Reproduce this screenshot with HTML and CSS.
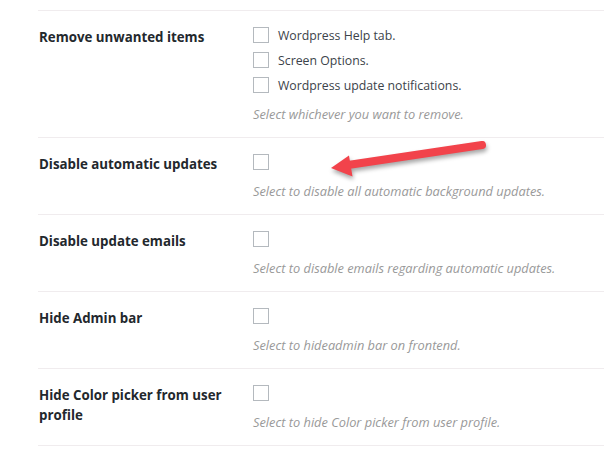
FILE: index.html
```html
<!DOCTYPE html>
<html>
<head>
    <title>Settings</title>
    <link rel="stylesheet" href="styles.css">
</head>
<body>
    <div class="wrap">
        <table class="form-table">
            <tr>
                <th>Remove unwanted items</th>
                <td>
                    <label class="option"><input type="checkbox"> Wordpress Help tab.</label>
                    <label class="option"><input type="checkbox"> Screen Options.</label>
                    <label class="option"><input type="checkbox"> Wordpress update notifications.</label>
                    <p class="description">Select whichever you want to remove.</p>
                </td>
            </tr>
            <tr>
                <th>Disable automatic updates</th>
                <td>
                    <label class="option"><input type="checkbox"></label>
                    <p class="description">Select to disable all automatic background updates.</p>
                </td>
            </tr>
            <tr>
                <th>Disable update emails</th>
                <td>
                    <label class="option"><input type="checkbox"></label>
                    <p class="description">Select to disable emails regarding automatic updates.</p>
                </td>
            </tr>
            <tr>
                <th>Hide Admin bar</th>
                <td>
                    <label class="option"><input type="checkbox"></label>
                    <p class="description">Select to hideadmin bar on frontend.</p>
                </td>
            </tr>
            <tr>
                <th>Hide Color picker from user profile</th>
                <td>
                    <label class="option"><input type="checkbox"></label>
                    <p class="description">Select to hide Color picker from user profile.</p>
                </td>
            </tr>
        </table>
    </div>

    <!-- red annotation arrow drawn over the screenshot -->
    <svg class="arrow" width="604" height="459" viewBox="0 0 604 459">
        <g class="arrow-shape">
            <line x1="482" y1="145" x2="348" y2="165" stroke="#f2434b" stroke-width="8" stroke-linecap="round"/>
            <polygon points="331,168 349,155.5 352.5,176.5" fill="#f2434b"/>
        </g>
    </svg>
</body>
</html>
```

FILE: styles.css
```css
body {
    margin: 0;
    font-family: "Open Sans", "Noto Sans", Arial, sans-serif;
    background: #fff;
    color: #444;
}

.wrap {
    padding: 10px 0 0 38px;
}

.form-table {
    width: 100%;
    border-collapse: collapse;
}

.form-table tr {
    border-top: 1px solid #f0ecee;
    border-bottom: 1px solid #f0ecee;
}

.form-table th {
    width: 200px;
    padding: 16px 14px 14px 1px;
    text-align: left;
    vertical-align: top;
    font-size: 13.3px;
    font-weight: 700;
    line-height: 20px;
    color: #23282d;
}

.form-table td {
    padding: 16px 0 14px 0;
    vertical-align: top;
}

.option {
    display: flex;
    align-items: center;
    gap: 9px;
    height: 16px;
    margin-bottom: 9px;
    font-size: 12.3px;
    color: #3c434a;
}

.option input {
    appearance: none;
    width: 16px;
    height: 16px;
    margin: 0;
    border: 1px solid #b4b9be;
    background: #fff;
    box-sizing: border-box;
}

/* margin collapses with the option's 9px, so this is the real gap */
.description {
    margin: 12px 0 0;
    font-size: 12.8px;
    font-style: italic;
    line-height: 18px;
    color: #999;
}

.arrow {
    position: absolute;
    top: 0;
    left: 0;
    pointer-events: none;
}

.arrow-shape {
    filter: drop-shadow(1px 3px 2px rgba(0, 0, 0, 0.35));
}
```
